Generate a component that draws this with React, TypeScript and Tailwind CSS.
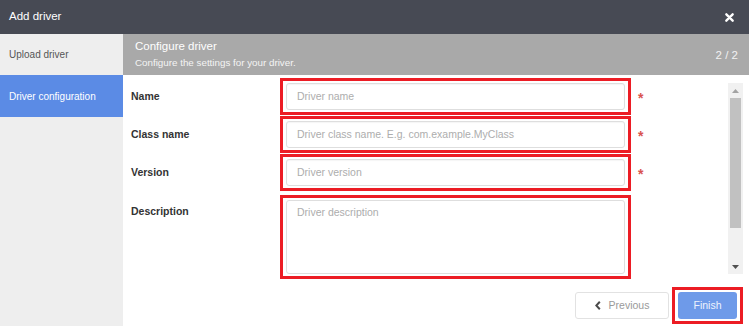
import React from "react";

function RedBox() {
  return (
    <div className="pointer-events-none absolute -left-[6px] -right-[6px] -top-[5px] -bottom-[5px] border-[3px] border-[#ec1c24]" />
  );
}

function Field({ label, placeholder, required }: { label: string; placeholder: string; required?: boolean }) {
  return (
    <div className="flex items-center h-[27px]">
      <div className="w-[163px] pl-[8px] text-[10.5px] font-bold text-[#333]">{label}</div>
      <div className="relative w-[339px] h-[27px]">
        <div className="h-full w-full rounded-[3px] border border-[#dedede] bg-white shadow-[inset_0_1px_1px_rgba(0,0,0,0.04)] flex items-center pl-[10px] text-[10.5px] text-[#adadad]">
          {placeholder}
        </div>
        <RedBox />
      </div>
      {required && <div className="pl-[13px] text-[14px] font-bold leading-none text-[#d9534f] mt-[2px]">*</div>}
    </div>
  );
}

export default function App() {
  return (
    <div className="w-[749px] h-[326px] flex flex-col overflow-hidden bg-white font-['Liberation_Sans',Arial,sans-serif]">
      <div className="h-[34px] shrink-0 bg-[#474a54] flex items-center justify-between pl-[9px] pr-[15px]">
        <span className="text-[11.5px] text-white">Add driver</span>
        <svg width="9" height="9" viewBox="0 0 10 10">
          <path d="M1.5 1.5 L8.5 8.5 M8.5 1.5 L1.5 8.5" stroke="#ffffff" strokeWidth="2.6" strokeLinecap="round" />
        </svg>
      </div>
      <div className="flex flex-1 min-h-0">
        <div className="w-[123px] shrink-0 bg-[#eeeeee] flex flex-col">
          <div className="h-[41px] flex items-center pl-[9px] text-[10px] text-[#555]">Upload driver</div>
          <div className="h-[42px] flex items-center pl-[9px] text-[10px] text-white bg-[#5b8be5]">Driver configuration</div>
        </div>
        <div className="flex-1 flex flex-col min-w-0">
          <div className="h-[41px] shrink-0 bg-[#a9a9a9] flex justify-between pl-[12px] pr-[11px]">
            <div className="flex flex-col pt-[5px]">
              <span className="text-[11.5px] leading-[14px] text-white">Configure driver</span>
              <span className="text-[9.8px] leading-[12px] mt-[4px] text-[#f4f4f4]">Configure the settings for your driver.</span>
            </div>
            <span className="text-[11.5px] text-[#f2f2f2] mt-[13px]">2 / 2</span>
          </div>
          <div className="h-[199px] shrink-0 pt-[8px] flex">
            <div className="flex-1 flex flex-col gap-[11px]">
              <Field label="Name" placeholder="Driver name" required />
              <Field label="Class name" placeholder="Driver class name. E.g. com.example.MyClass" required />
              <Field label="Version" placeholder="Driver version" required />
              <div className="flex items-start mt-[3px]">
                <div className="w-[163px] pl-[8px] pt-[5px] leading-[12px] text-[10.5px] font-bold text-[#333]">Description</div>
                <div className="relative w-[339px] h-[74px]">
                  <div className="h-full w-full rounded-[3px] border border-[#dedede] bg-white pl-[10px] pt-[5px] text-[10.5px] leading-[12px] text-[#adadad]">
                    Driver description
                  </div>
                  <RedBox />
                </div>
              </div>
            </div>
            <div className="w-[15px] mr-[6px] h-[191px] bg-[#f1f1f1] flex flex-col items-center">
              <div className="h-[15px] w-full flex items-center justify-center">
                <svg width="7" height="4" viewBox="0 0 7 4"><path d="M0 4 L3.5 0 L7 4 Z" fill="#a3a3a3" /></svg>
              </div>
              <div className="w-[11px] h-[130px] bg-[#c1c1c1]" />
              <div className="flex-1" />
              <div className="h-[15px] w-full flex items-center justify-center">
                <svg width="7" height="4" viewBox="0 0 7 4"><path d="M0 0 L7 0 L3.5 4 Z" fill="#505050" /></svg>
              </div>
            </div>
          </div>
          <div className="flex justify-end gap-[9px] pt-[18px] pr-[12px]">
            <div className="w-[94px] h-[27px] rounded-[3px] border border-[#e2e2e2] bg-white flex items-center justify-center gap-[8px]">
              <svg width="6" height="9" viewBox="0 0 6 9"><path d="M4.8 0.8 L1.3 4.5 L4.8 8.2" stroke="#4a4a4a" strokeWidth="2" fill="none" /></svg>
              <span className="text-[10.5px] text-[#9a9a9a]">Previous</span>
            </div>
            <div className="relative w-[59px] h-[27px]">
              <div className="h-full w-full rounded-[3px] bg-[#6e9ae9] flex items-center justify-center text-[10.5px] text-[#eef3fd]">Finish</div>
              <RedBox />
            </div>
          </div>
        </div>
      </div>
    </div>
  );
}
